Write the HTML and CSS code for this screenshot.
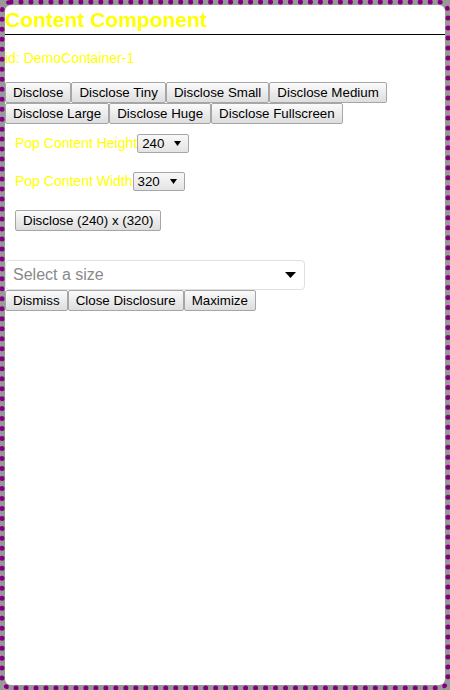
FILE: index.html
```html
<!DOCTYPE html>
<html>
<head>
<meta charset="utf-8">
<link rel="stylesheet" href="styles.css">
</head>
<body>
<div class="panel">
  <div class="title">Content Component</div>
  <div class="ident">id: DemoContainer-1</div>
  <div class="btn-row">
    <button class="btn">Disclose</button>
    <button class="btn">Disclose Tiny</button>
    <button class="btn">Disclose Small</button>
    <button class="btn">Disclose Medium</button>
    <button class="btn">Disclose Large</button>
    <button class="btn">Disclose Huge</button>
    <button class="btn">Disclose Fullscreen</button>
  </div>
  <div class="pop">
    <div class="pop-row pop-row-first">
      <span class="label">Pop Content Height</span>
      <span class="select-mini"><span class="val">240</span><svg class="arrow" width="7" height="5" viewBox="0 0 7 5"><path d="M0 0H7L3.5 5Z" fill="#000"/></svg></span>
    </div>
    <div class="pop-row pop-row-second">
      <span class="label">Pop Content Width</span>
      <span class="select-mini"><span class="val">320</span><svg class="arrow" width="7" height="5" viewBox="0 0 7 5"><path d="M0 0H7L3.5 5Z" fill="#000"/></svg></span>
    </div>
    <button class="btn pop-btn">Disclose (240) x (320)</button>
  </div>
  <div class="size-select">
    <span class="placeholder">Select a size</span>
    <svg class="caret" width="11" height="6" viewBox="0 0 11 6"><path d="M0 0H11L5.5 6Z" fill="#000"/></svg>
  </div>
  <div class="btn-row">
    <button class="btn">Dismiss</button>
    <button class="btn">Close Disclosure</button>
    <button class="btn">Maximize</button>
  </div>
</div>
</body>
</html>
```

FILE: styles.css
```css
html, body {
  margin: 0;
  padding: 0;
}
body {
  background: #999999;
  width: 450px;
  height: 690px;
  overflow: hidden;
  font-family: "Liberation Sans", Arial, sans-serif;
}
.panel {
  box-sizing: border-box;
  width: 450px;
  height: 690px;
  border: 5px dotted #800080;
  border-radius: 11px;
  background: #ffffff;
  background-clip: padding-box;
}
.title {
  margin-top: 3px;
  font-size: 21px;
  font-weight: bold;
  line-height: 24px;
  color: #ffff00;
  padding-bottom: 2px;
  border-bottom: 1px solid #000;
}
.ident {
  margin-top: 15px;
  font-size: 14px;
  line-height: 16px;
  color: #ffff00;
}
.btn-row {
  display: flex;
  flex-wrap: wrap;
}
.ident + .btn-row {
  margin-top: 16px;
}
.btn {
  box-sizing: border-box;
  height: 21px;
  margin: 0;
  padding: 2px 7px;
  border: 1px solid #a6a6a6;
  border-radius: 2px;
  background: linear-gradient(#fbfbfb, #dddddd);
  font-family: "Liberation Sans", Arial, sans-serif;
  font-size: 13.333px;
  line-height: 15px;
  color: #000;
  white-space: nowrap;
}
.pop {
  padding-left: 10px;
}
.pop-row {
  display: flex;
  align-items: center;
  height: 20px;
}
.pop-row-first {
  margin-top: 9px;
}
.pop-row-second {
  margin-top: 18px;
}
.label {
  font-size: 14px;
  color: #ffff00;
}
.select-mini {
  box-sizing: border-box;
  display: flex;
  align-items: center;
  justify-content: space-between;
  width: 52px;
  height: 19px;
  padding: 0 7px 0 4px;
  border: 1px solid #a6a6a6;
  border-radius: 2px;
  background: linear-gradient(#f8f8f8, #e4e4e4);
  font-size: 13.333px;
  color: #000;
}
.arrow {
  display: block;
}
.pop-btn {
  margin-top: 19px;
  display: block;
}
.size-select {
  box-sizing: border-box;
  margin-top: 29px;
  width: 300px;
  height: 30px;
  display: flex;
  align-items: center;
  justify-content: space-between;
  padding: 0 8px 0 7px;
  border: 1px solid #e0e0e0;
  border-radius: 4px;
  background: #fff;
}
.placeholder {
  font-size: 16px;
  color: #8a8a8a;
}
.caret {
  display: block;
}
```
